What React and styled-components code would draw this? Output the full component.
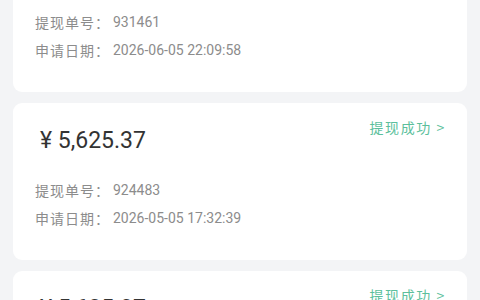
import styled, { createGlobalStyle } from "styled-components";

const GlobalStyle = createGlobalStyle`
  html, body {
    margin: 0;
    padding: 0;
    background: #f3f4f6;
    overflow: hidden;
  }
  body {
    font-family: Roboto, "Noto Sans CJK SC", sans-serif;
  }
`;

const records = [
  { id: "931461", amount: "5,625.37", date: "2026-06-05 22:09:58" },
  { id: "924483", amount: "5,625.37", date: "2026-05-05 17:32:39" },
  { id: "918207", amount: "5,625.37", date: "2026-04-05 10:15:22" },
];

const App = () => {
  return (
    <>
      <GlobalStyle />
      <List>
        {records.map((r) => (
          <Card key={r.id}>
            <Header>
              <Amount>¥ {r.amount}</Amount>
              <Status>提现成功 &gt;</Status>
            </Header>
            <Rows>
              <Row>
                <Label>提现单号：</Label>
                <Value>{r.id}</Value>
              </Row>
              <Row>
                <Label>申请日期：</Label>
                <Value>{r.date}</Value>
              </Row>
            </Rows>
          </Card>
        ))}
      </List>
    </>
  );
};

const List = styled.div`
  display: flex;
  flex-direction: column;
  gap: 11px;
  padding: 0 13px;
  margin-top: -65px;
`;

const Card = styled.div`
  background: #fff;
  border-radius: 9px;
  padding: 15px 21px 0 22px;
  height: 157px;
  box-sizing: border-box;
`;

const Header = styled.div`
  display: flex;
  justify-content: space-between;
  align-items: flex-start;
`;

const Amount = styled.div`
  margin-top: 8px;
  padding-left: 5px;
  font-size: 23px;
  line-height: 30px;
  color: #333;
`;

const Status = styled.div`
  font-family: "Noto Sans CJK SC", sans-serif;
  font-size: 14px;
  line-height: 18px;
  color: #5cbf9c;
  letter-spacing: 1.6px;
`;

const Rows = styled.div`
  display: flex;
  flex-direction: column;
  gap: 8px;
  margin-top: 24px;
`;

const Row = styled.div`
  display: flex;
  align-items: center;
  height: 20px;
  font-size: 14px;
  color: #8c8c8c;
`;

const Label = styled.span`
  font-family: "Noto Sans CJK SC", sans-serif;
  letter-spacing: 1px;
`;

const Value = styled.span`
  font-family: Roboto, sans-serif;
  margin-left: 3px;
`;

export default App;
